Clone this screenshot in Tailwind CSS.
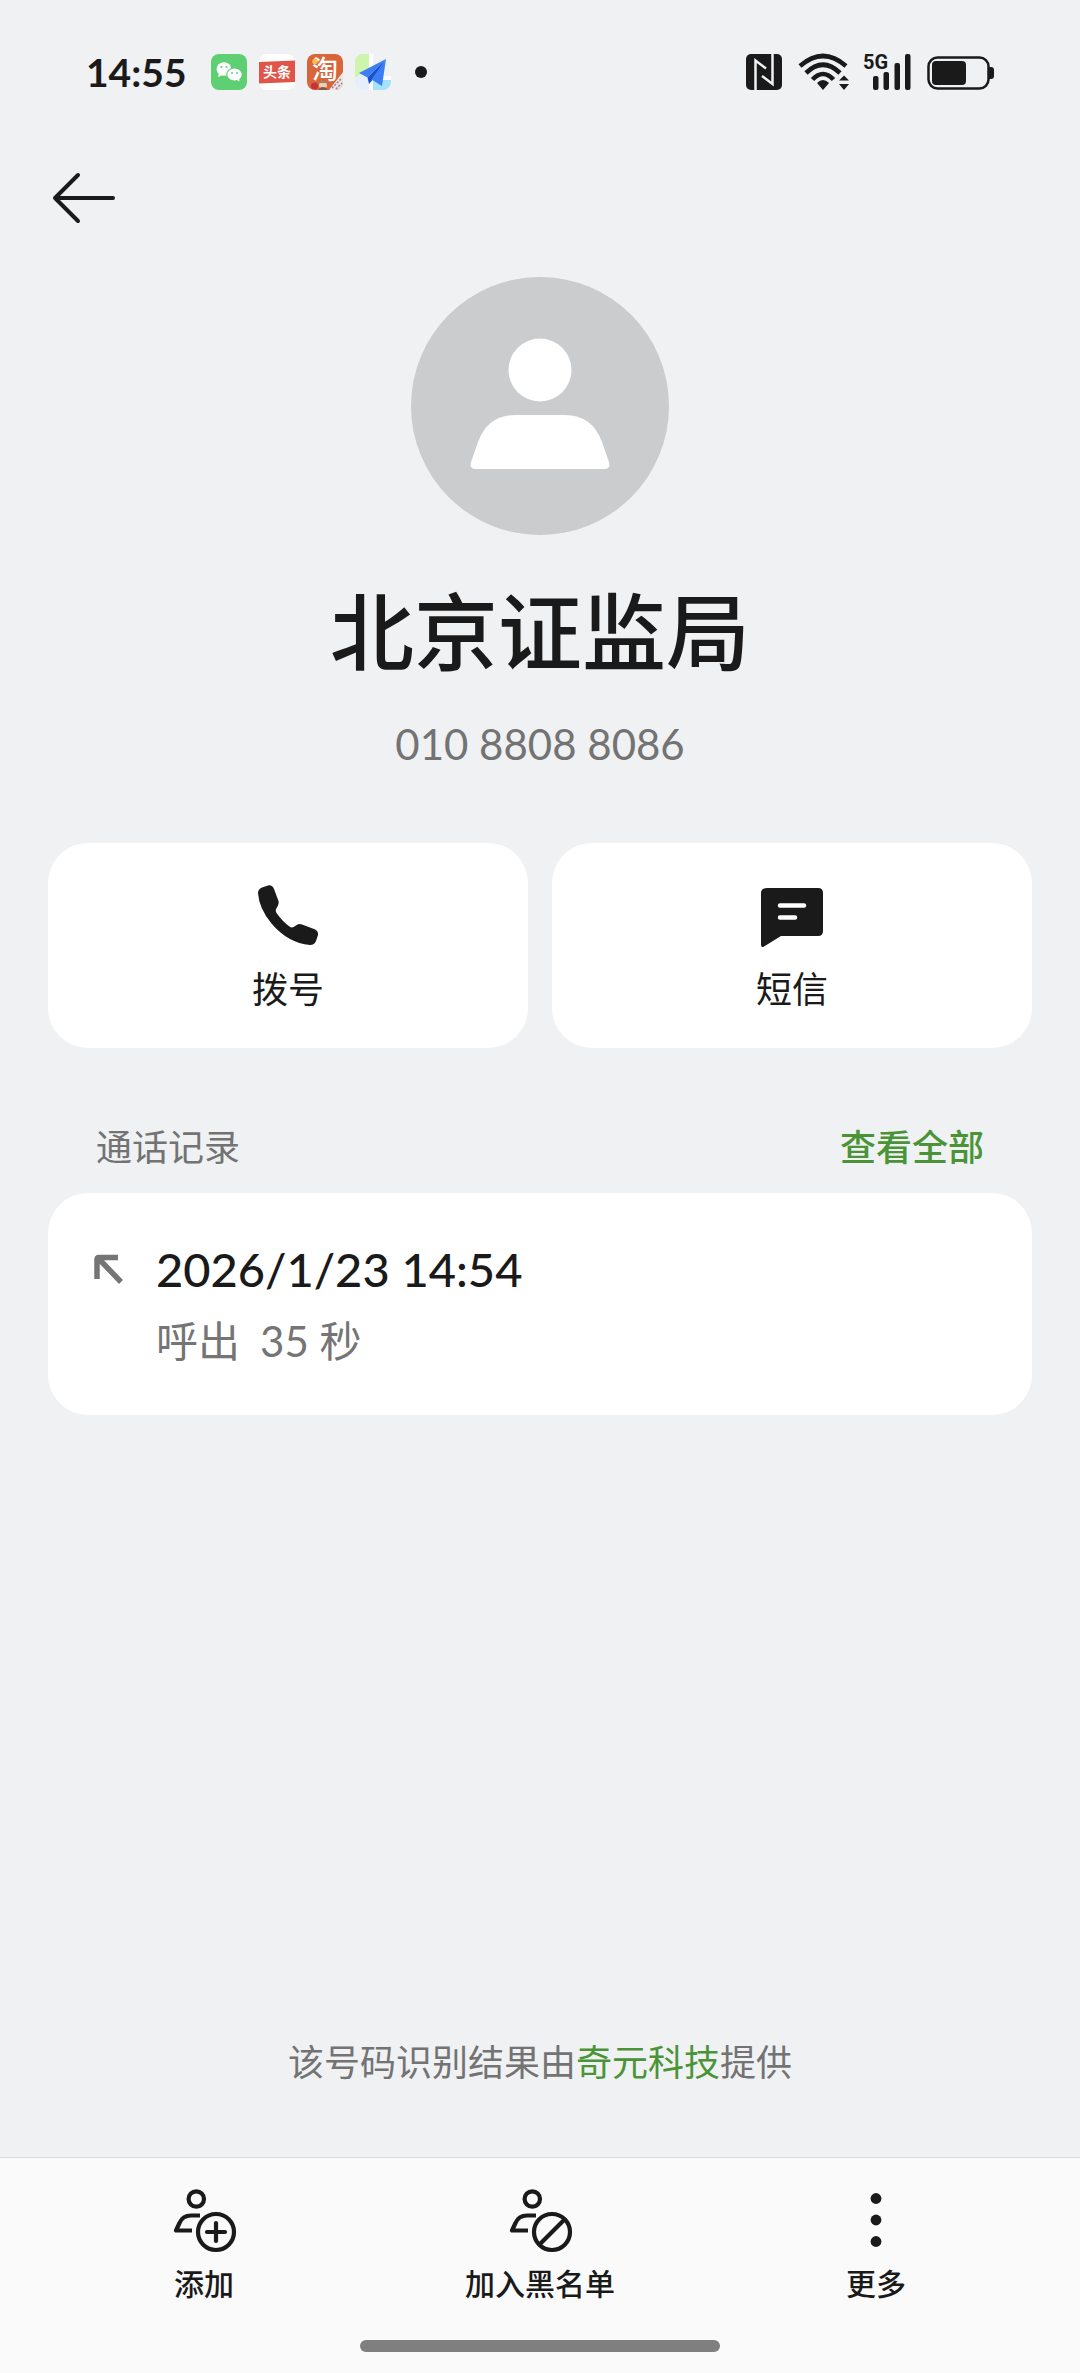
<!DOCTYPE html>
<html lang="zh-CN">
  <head>
    <meta charset="UTF-8" />
    <meta name="viewport" content="width=device-width, initial-scale=1.0" />
    <title>北京证监局</title>
    <script src="https://cdn.jsdelivr.net/npm/@tailwindcss/browser@4"></script>
    <style>
      body {
        font-family: Lato, "Noto Sans CJK SC", sans-serif;
      }
    </style>
  </head>

  <body class="flex min-h-screen flex-col bg-[#eff1f3] text-[#1a1a1a]">
    <!-- status bar -->
    <div class="flex h-36 items-center justify-between px-[86px]">
      <div class="flex items-center gap-3">
        <span class="mr-3 text-[39px] leading-[48px] font-bold">14:55</span>
        <!-- wechat -->
        <svg class="size-9" viewBox="0 0 36 36">
          <rect width="36" height="36" rx="8" fill="#5fcf74" />
          <ellipse cx="13" cy="15" rx="7.5" ry="6.7" fill="#fff" />
          <path d="M8 19l-1 4 4.500-2z" fill="#fff" />
          <ellipse cx="23.500" cy="20.500" rx="8.200" ry="7" fill="#5fcf74" />
          <ellipse cx="23.500" cy="20.500" rx="7.200" ry="6" fill="#fff" />
          <path d="M25 25.500l3.500 2-.5-4z" fill="#fff" />
          <circle cx="10.500" cy="13" r="1.100" fill="#5fcf74" />
          <circle cx="15.500" cy="13" r="1.100" fill="#5fcf74" />
          <circle cx="21" cy="19" r="1" fill="#5fcf74" />
          <circle cx="26" cy="19" r="1" fill="#5fcf74" />
        </svg>
        <!-- toutiao -->
        <svg class="size-9" viewBox="0 0 36 36">
          <rect width="36" height="36" rx="8" fill="#fff" />
          <path d="M0 8l36-1.500V28L0 29.500z" fill="#e0544a" />
          <text x="18" y="23" text-anchor="middle" font-size="14" font-weight="700" fill="#fff">头条</text>
        </svg>
        <!-- taobao -->
        <svg class="size-9" viewBox="0 0 36 36">
          <defs>
            <clipPath id="tb"><rect width="36" height="36" rx="8" /></clipPath>
          </defs>
          <g clip-path="url(#tb)">
            <rect width="36" height="36" fill="#d9653b" />
            <path d="M36 18v18H22z" fill="#efe3dc" />
            <path d="M25 34l9-9M29 35l6-6" stroke="#8b7fa8" stroke-width="1.500" stroke-dasharray="2 1.500" />
            <circle cx="7.500" cy="32" r="3.500" fill="#c9313a" />
            <circle cx="16" cy="31" r="4" fill="#ecd0b4" />
            <path d="M11.500 30a4.500 4 0 019 0l-2-1h-5z" fill="#a9805f" />
            <path d="M12 36a4 3 0 018 0z" fill="#7d5a4a" />
            <text x="18" y="24.500" text-anchor="middle" font-size="26" font-weight="500" fill="#fff">淘</text>
            <circle cx="8" cy="7.500" r="2.800" fill="#fbc04a" />
          </g>
        </svg>
        <!-- amap -->
        <svg class="size-9" viewBox="0 0 36 36">
          <defs>
            <clipPath id="am"><rect width="36" height="36" rx="8" /></clipPath>
          </defs>
          <g clip-path="url(#am)">
            <rect width="36" height="36" fill="#eef2f5" />
            <path d="M0 0h14v15L0 24z" fill="#cdf5ab" />
            <path d="M18 26h18v10H18z" fill="#a3e2fb" />
            <path d="M14 0h4v36h-4z" fill="#fff" />
            <path d="M0 24l14-4v16H0z" fill="#e6eefb" />
            <path d="M18 22h18v4H18z" fill="#fff" />
          </g>
          <path d="M31 5L4 19l8.500 4.500z" fill="#3c7ff5" />
          <path d="M31 5L12.500 23.500l1.500 6.500 4-4.500z" fill="#1c50cf" />
          <path d="M31 5L16.500 25.500 27 32z" fill="#3c7ff5" />
        </svg>
        <span class="ml-3 size-3 rounded-full bg-[#1a1a1a]"></span>
      </div>

      <div class="flex items-center gap-4">
        <!-- nfc -->
        <svg class="size-9" viewBox="0 0 36 36">
          <rect width="36" height="36" rx="5" fill="#1a1a1a" />
          <g fill="none" stroke="#eff1f3" stroke-width="2.500">
            <path d="M9.500 36V6.500L20 14.500" />
            <path d="M26.500 0v30L16 22" />
          </g>
        </svg>
        <!-- wifi -->
        <svg class="h-[38px] w-[49px] overflow-visible" viewBox="0 0 49 38">
          <g fill="none" stroke="#1a1a1a" stroke-width="4.600">
            <path d="M2 13Q25-7 48 13" />
            <path d="M8 20Q25 3.500 42 20" />
            <path d="M14.500 26.500Q25 15.500 35.500 26.500" />
          </g>
          <path d="M19 30q6-6 12 0l-6 7z" fill="#1a1a1a" />
          <path d="M41 27.500l5-5 5 5zM41 31h10l-5 6z" fill="#1a1a1a" />
        </svg>
        <!-- signal -->
        <svg class="h-[38px] w-12 overflow-visible" viewBox="0 0 48 38">
          <text x="0" y="16" font-family="Roboto, sans-serif" font-size="20" font-weight="700" fill="#1a1a1a">5G</text>
          <g fill="#1a1a1a">
            <rect x="10" y="23" width="5.500" height="14" rx="2" />
            <rect x="20.500" y="19" width="5.500" height="18" rx="2" />
            <rect x="31.500" y="10" width="5.500" height="27" rx="2" />
            <rect x="42" y="1" width="5.500" height="36" rx="2" />
          </g>
        </svg>
        <!-- battery -->
        <svg class="h-9 w-[67px]" viewBox="0 -2 67 36">
          <rect x="1.500" y="1.500" width="60" height="31" rx="9" fill="none" stroke="#1a1a1a" stroke-width="2.500" />
          <rect x="5" y="5" width="34" height="24" rx="4" fill="#1a1a1a" />
          <path d="M62 11h2a3 3 0 013 3v6a3 3 0 01-3 3h-2z" fill="#1a1a1a" />
        </svg>
      </div>
    </div>

    <header class="flex h-27 items-center px-12">
      <button type="button" aria-label="返回">
        <svg class="size-[72px]" viewBox="0 0 72 72" fill="none" stroke="#1a1a1a" stroke-width="4" stroke-linecap="round" stroke-linejoin="round">
          <path d="M30 13L7 36l23 23M7 36h58" />
        </svg>
      </button>
    </header>

    <main class="flex flex-1 flex-col px-12">
      <section class="flex flex-col items-center pt-[25px]">
        <svg class="size-[258px]" viewBox="0 0 258 258">
          <circle cx="129" cy="129" r="129" fill="#cbccce" />
          <circle cx="129" cy="93" r="31.500" fill="#fff" />
          <path
            d="M104 138h50q27 0 37 27l7 20q2 7-5 7H65q-7 0-5-7l7-20q10-27 37-27z"
            fill="#fff"
          />
        </svg>
        <h1 class="mt-[49px] text-[84px] leading-[96px] font-medium">
          北京证监局
        </h1>
        <p class="mt-[34px] text-[42px] leading-[60px] text-[#737373]">
          010 8808 8086
        </p>
      </section>

      <section class="mt-[69px] grid grid-cols-2 gap-6">
        <button
          type="button"
          class="flex flex-col items-center rounded-[40px] bg-white pt-9 pb-[35px]"
        >
          <svg class="size-[72px]" viewBox="0 0 72 72">
            <path
              d="M10 8.500L16 6.500Q20 5.500 22 10L26.500 22Q27.200 24.500 26 26.500L24 30Q23.200 32 24.500 34Q30.500 42.500 37.500 47.500Q39.500 49 41.500 48L45.500 45.500Q47.500 44.500 50 45.500L62 50Q66.500 51.500 66 56L64 62Q62.500 66 58 66Q36 64 19.500 44.500Q7 29.500 6 14Q6 10 10 8.500Z"
              fill="#1a1a1a"
            />
          </svg>
          <span class="mt-[14px] text-[36px] leading-[48px]">拨号</span>
        </button>
        <button
          type="button"
          class="flex flex-col items-center rounded-[40px] bg-white pt-9 pb-[35px]"
        >
          <svg class="size-[72px]" viewBox="0 0 72 72">
            <path
              d="M11 9h51q5 0 5 5v38q0 5-5 5H25L8 67.500q-3 1.500-3-1.500V14q0-5 6-5z"
              fill="#1a1a1a"
            />
            <path d="M24 26.500h24M24 38.500h15" stroke="#fff" stroke-width="4.500" stroke-linecap="round" />
          </svg>
          <span class="mt-[14px] text-[36px] leading-[48px]">短信</span>
        </button>
      </section>

      <section class="mt-[75px]">
        <div class="flex justify-between px-12 text-[36px] leading-[48px]">
          <h2 class="text-[#737373]">通话记录</h2>
          <a href="#" class="font-medium text-[#4a9437]">查看全部</a>
        </div>
        <div class="mt-[22px] flex rounded-[40px] bg-white px-10 pt-10 pb-11">
          <svg class="mt-3 size-12" viewBox="0 0 48 48" fill="none" stroke="#757575" stroke-width="5.500">
            <path d="M30 12.500H11q-2 0-2 2V34M11 14l22 23" />
          </svg>
          <div class="ml-5">
            <div class="text-[47px] leading-[72px] font-medium">
              2026/1/23 14:54
            </div>
            <div class="mt-1.5 flex gap-5 text-[42px] leading-[60px] text-[#757575]">
              <span>呼出</span>
              <span>35 秒</span>
            </div>
          </div>
        </div>
      </section>

      <p class="mt-auto pb-[71px] text-center text-[36px] leading-[48px] text-[#737373]">
        该号码识别结果由<a href="#" class="text-[#4a9437]">奇元科技</a>提供
      </p>
    </main>

    <nav
      class="border-t border-[#d9dbdd] bg-[#fafafa] px-9 pt-[26px] pb-[21px] text-[30px] leading-[42px] font-medium"
    >
      <div class="grid grid-cols-3">
        <button type="button" class="flex flex-col items-center gap-1.5">
          <svg class="size-[72px]" viewBox="0 0 72 72" fill="none" stroke="#1a1a1a" stroke-width="4.200">
            <circle cx="28.300" cy="15" r="7.700" />
            <path d="M32 31.500H23q-8.500 0-11.500 7.500L8 46.500h16" stroke-linejoin="round" />
            <circle cx="48" cy="48" r="18" />
            <path d="M39 48h18M48 39v18" stroke-linecap="round" />
          </svg>
          添加
        </button>
        <button type="button" class="flex flex-col items-center gap-1.5">
          <svg class="size-[72px]" viewBox="0 0 72 72" fill="none" stroke="#1a1a1a" stroke-width="4.200">
            <circle cx="28.300" cy="15" r="7.700" />
            <path d="M32 31.500H23q-8.500 0-11.500 7.500L8 46.500h16" stroke-linejoin="round" />
            <circle cx="48" cy="48" r="18" />
            <path d="M35.500 60.500l25-25" />
          </svg>
          加入黑名单
        </button>
        <button type="button" class="flex flex-col items-center gap-1.5">
          <svg class="size-[72px]" viewBox="0 0 72 72" fill="#1a1a1a">
            <circle cx="36" cy="14.500" r="5.400" />
            <circle cx="36" cy="36" r="5.400" />
            <circle cx="36" cy="57.500" r="5.400" />
          </svg>
          更多
        </button>
      </div>
      <!-- gesture bar -->
      <div class="mx-auto mt-9 h-3 w-90 rounded-full bg-[#7f7f7f]"></div>
    </nav>
  </body>
</html>
